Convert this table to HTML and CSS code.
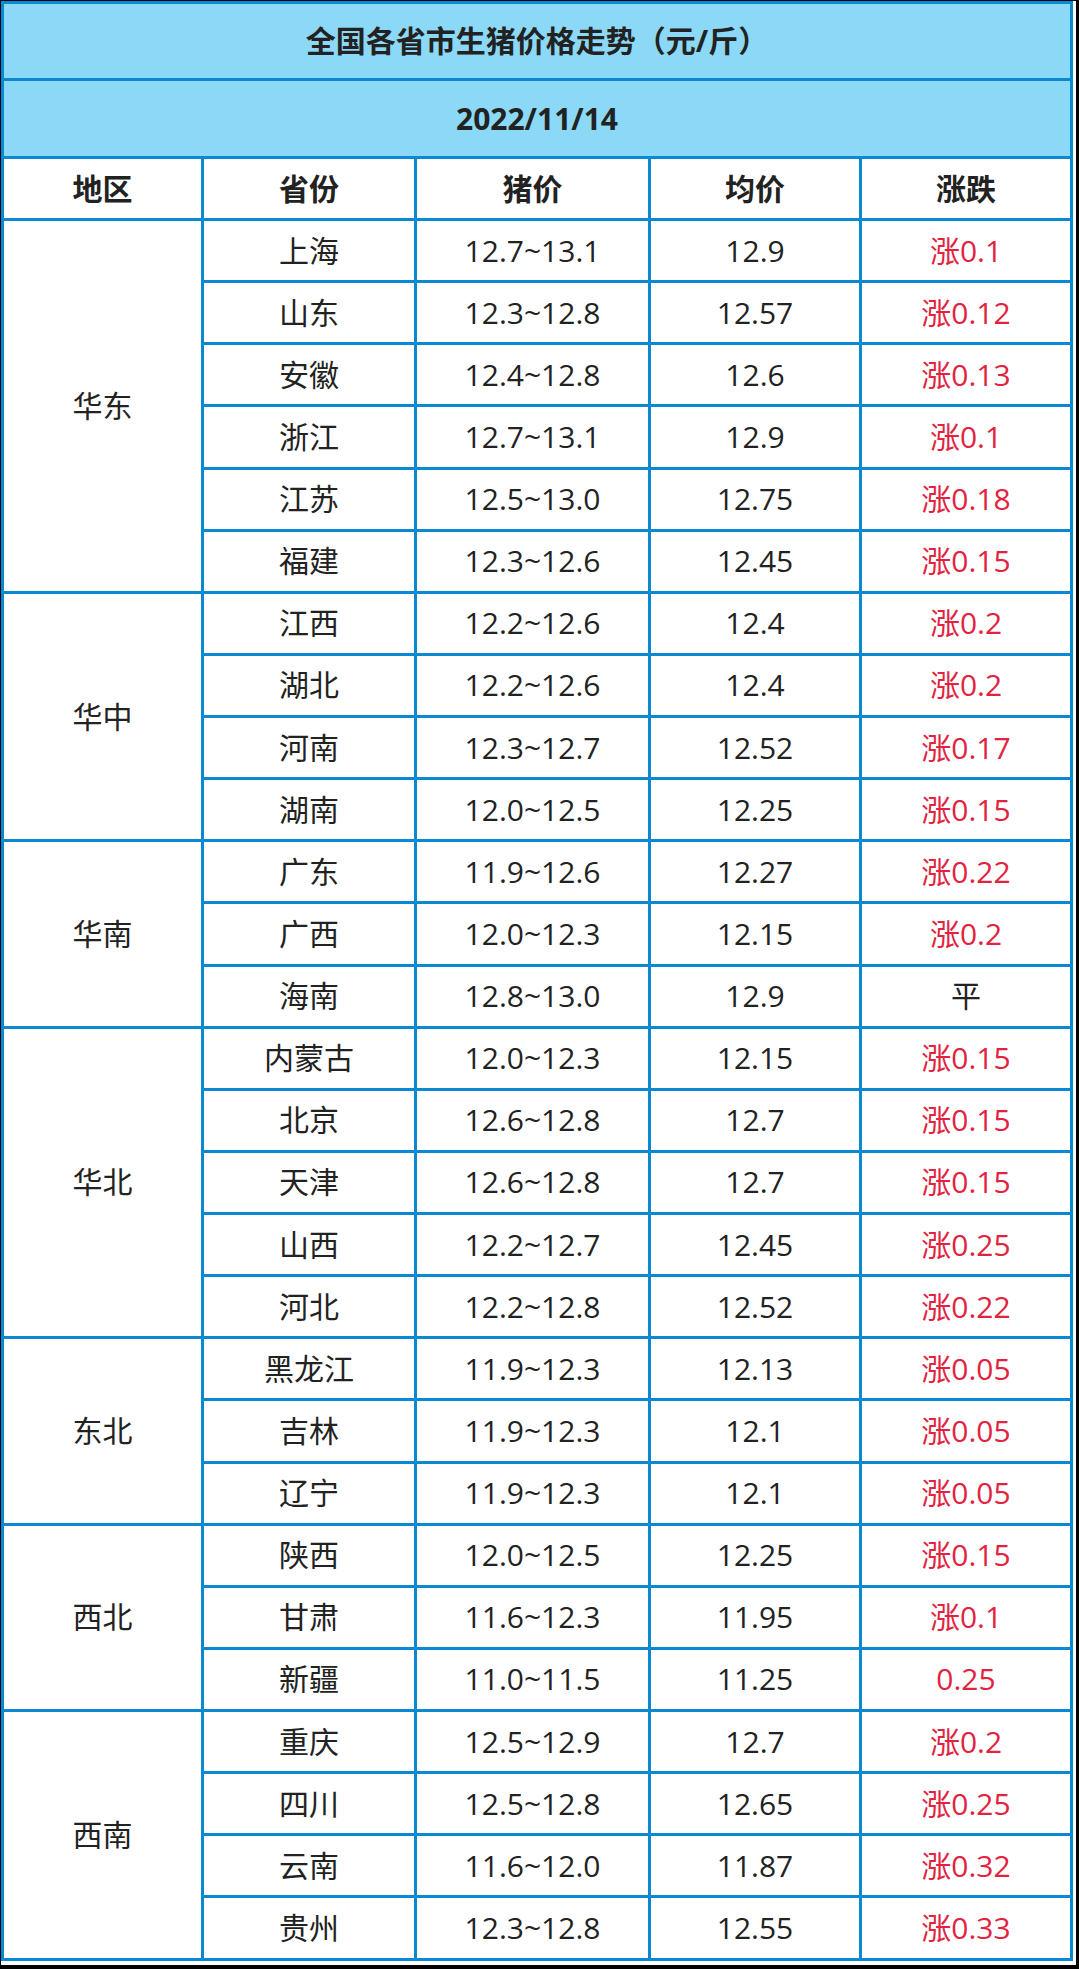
FILE: index.html
```html
<!DOCTYPE html>
<html lang="zh-CN">
<head>
<meta charset="utf-8">
<title>全国各省市生猪价格走势</title>
<link rel="stylesheet" href="styles.css">
</head>
<body>
<div class="frame">
<table class="price-table">
  <colgroup>
    <col class="c-region">
    <col class="c-prov">
    <col class="c-range">
    <col class="c-avg">
    <col class="c-chg">
  </colgroup>
  <tbody>
    <tr class="row-title"><td colspan="5">全国各省市生猪价格走势（元/斤）</td></tr>
    <tr class="row-date"><td colspan="5">2022/11/14</td></tr>
    <tr class="row-head"><td>地区</td><td>省份</td><td>猪价</td><td>均价</td><td>涨跌</td></tr>

    <tr><td rowspan="6">华东</td><td>上海</td><td>12.7~13.1</td><td>12.9</td><td class="up">涨0.1</td></tr>
    <tr><td>山东</td><td>12.3~12.8</td><td>12.57</td><td class="up">涨0.12</td></tr>
    <tr><td>安徽</td><td>12.4~12.8</td><td>12.6</td><td class="up">涨0.13</td></tr>
    <tr><td>浙江</td><td>12.7~13.1</td><td>12.9</td><td class="up">涨0.1</td></tr>
    <tr><td>江苏</td><td>12.5~13.0</td><td>12.75</td><td class="up">涨0.18</td></tr>
    <tr><td>福建</td><td>12.3~12.6</td><td>12.45</td><td class="up">涨0.15</td></tr>

    <tr><td rowspan="4">华中</td><td>江西</td><td>12.2~12.6</td><td>12.4</td><td class="up">涨0.2</td></tr>
    <tr><td>湖北</td><td>12.2~12.6</td><td>12.4</td><td class="up">涨0.2</td></tr>
    <tr><td>河南</td><td>12.3~12.7</td><td>12.52</td><td class="up">涨0.17</td></tr>
    <tr><td>湖南</td><td>12.0~12.5</td><td>12.25</td><td class="up">涨0.15</td></tr>

    <tr><td rowspan="3">华南</td><td>广东</td><td>11.9~12.6</td><td>12.27</td><td class="up">涨0.22</td></tr>
    <tr><td>广西</td><td>12.0~12.3</td><td>12.15</td><td class="up">涨0.2</td></tr>
    <tr><td>海南</td><td>12.8~13.0</td><td>12.9</td><td>平</td></tr>

    <tr><td rowspan="5">华北</td><td>内蒙古</td><td>12.0~12.3</td><td>12.15</td><td class="up">涨0.15</td></tr>
    <tr><td>北京</td><td>12.6~12.8</td><td>12.7</td><td class="up">涨0.15</td></tr>
    <tr><td>天津</td><td>12.6~12.8</td><td>12.7</td><td class="up">涨0.15</td></tr>
    <tr><td>山西</td><td>12.2~12.7</td><td>12.45</td><td class="up">涨0.25</td></tr>
    <tr><td>河北</td><td>12.2~12.8</td><td>12.52</td><td class="up">涨0.22</td></tr>

    <tr><td rowspan="3">东北</td><td>黑龙江</td><td>11.9~12.3</td><td>12.13</td><td class="up">涨0.05</td></tr>
    <tr><td>吉林</td><td>11.9~12.3</td><td>12.1</td><td class="up">涨0.05</td></tr>
    <tr><td>辽宁</td><td>11.9~12.3</td><td>12.1</td><td class="up">涨0.05</td></tr>

    <tr><td rowspan="3">西北</td><td>陕西</td><td>12.0~12.5</td><td>12.25</td><td class="up">涨0.15</td></tr>
    <tr><td>甘肃</td><td>11.6~12.3</td><td>11.95</td><td class="up">涨0.1</td></tr>
    <tr><td>新疆</td><td>11.0~11.5</td><td>11.25</td><td class="up">0.25</td></tr>

    <tr><td rowspan="4">西南</td><td>重庆</td><td>12.5~12.9</td><td>12.7</td><td class="up">涨0.2</td></tr>
    <tr><td>四川</td><td>12.5~12.8</td><td>12.65</td><td class="up">涨0.25</td></tr>
    <tr><td>云南</td><td>11.6~12.0</td><td>11.87</td><td class="up">涨0.32</td></tr>
    <tr><td>贵州</td><td>12.3~12.8</td><td>12.55</td><td class="up">涨0.33</td></tr>
  </tbody>
</table>
</div>
</body>
</html>
```
FILE: styles.css
```css
html, body {
  margin: 0;
  padding: 0;
  background: #000;
}

.frame {
  margin: 1px 0 0 1px;
  width: 1075px;
  height: 1964px;
  background: #fff;
}

.price-table {
  width: 1072px;
  table-layout: fixed;
  border-collapse: collapse;
  border: 3px solid #0a89d2;
  font-family: "Open Sans", "Noto Sans CJK SC", sans-serif;
  font-size: 30px;
  color: #222;
}

.c-region { width: 200px; }
.c-prov { width: 213px; }
.c-range { width: 234px; }
.c-avg { width: 211px; }
.c-chg { width: 211px; }

.price-table td {
  border: 3px solid #0a89d2;
  padding: 0;
  text-align: center;
  vertical-align: middle;
  line-height: 1.2;
  white-space: nowrap;
}

.price-table tr {
  height: 62.14px;
}

.price-table .row-title {
  height: 77px;
}

.price-table .row-date {
  height: 78px;
}

.price-table .row-head {
  height: 62px;
}

.row-title td,
.row-date td {
  background: #8bd9f7;
  font-weight: 700;
}

.row-head td {
  font-weight: 700;
}

.price-table td.up {
  color: #e2233f;
}
```
